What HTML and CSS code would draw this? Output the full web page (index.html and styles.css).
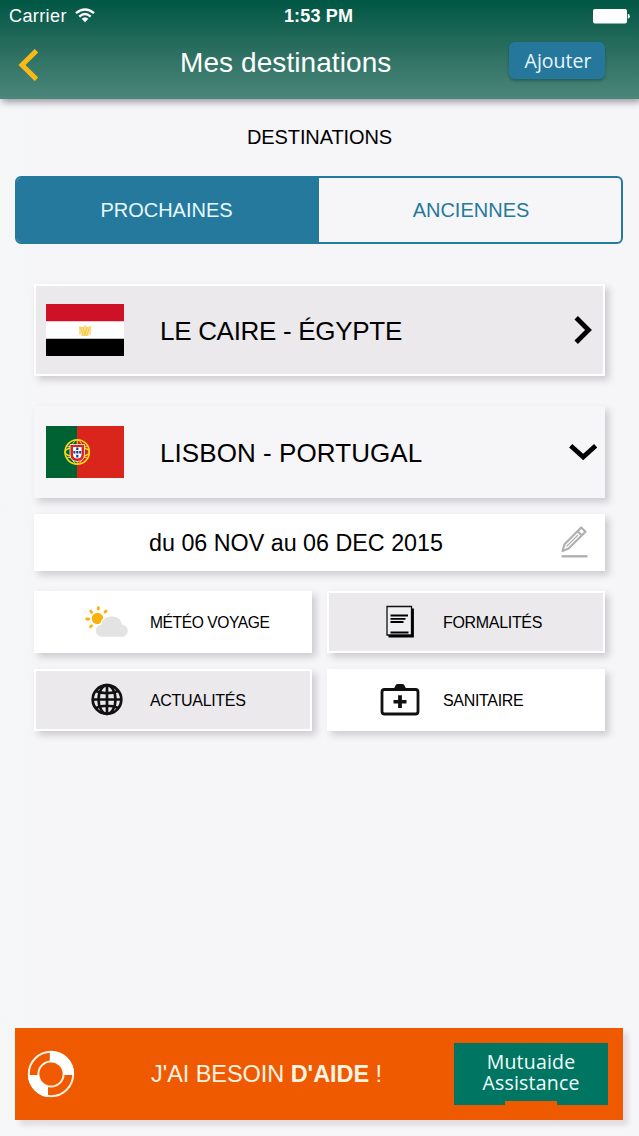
FILE: index.html
```html
<!DOCTYPE html>
<html lang="fr">
<head>
<meta charset="utf-8">
<title>Mes destinations</title>
<link rel="stylesheet" href="styles.css">
</head>
<body>
<div class="app">
  <header class="header">
    <div class="status">
      <div class="carrier"><span>Carrier</span>
        <svg class="wifi" width="20" height="15" viewBox="0 0 20 15" fill="none" stroke="#fff" stroke-width="2.4"><path d="M1 5.2Q10-2.4 19 5.2M4.3 8.6Q10 3.600 15.700 8.600"/><path d="M6.600 10.800Q10 7.800 13.400 10.800L10 14.200Z" fill="#fff" stroke="none"/></svg>
      </div>
      <span class="clock">1:53 PM</span>
      <svg class="battery" width="38" height="15" viewBox="0 0 38 15" fill="#fff"><rect x="1" y="0" width="34" height="14.500" rx="2"/><path d="M35.800 4.800Q37.800 5.200 37.800 7.200T35.800 9.800Z"/></svg>
    </div>
    <div class="nav">
      <svg class="back" width="20" height="32" viewBox="0 0 20 32" fill="none" stroke="#f6bb16" stroke-width="5"><path d="M18.500 1.700L4 16L18.500 30.300"/></svg>
      <h1 class="title">Mes destinations</h1>
      <button class="add">Ajouter</button>
    </div>
  </header>

  <main class="content">
    <h2 class="heading">DESTINATIONS</h2>
    <div class="tabs">
      <div class="tab active">PROCHAINES</div>
      <div class="tab">ANCIENNES</div>
    </div>

    <div class="list">
      <div class="card trip shaded">
        <svg class="flag" width="78" height="52" viewBox="0 0 78 52"><path fill="#fff" d="M0 0h78v52H0z"/><path fill="#ce1126" d="M0 0h78v17.300H0z"/><path d="M0 34.800h78V52H0z"/><path d="M33 22l4 1 1-1.500h2l1 1.500 4-1v9l-3-1 1 2h-8l1-2-3 1z" fill="#f9df8c"/><path d="M34 23l3 7M44 23l-3 7M37 23l2 7M41 23l-2 7M36 31h6" stroke="#f0c030" stroke-width=".8"/></svg>
        <span class="place cairo">LE CAIRE - ÉGYPTE</span>
        <svg class="arrow" width="28" height="28" viewBox="0 0 28 28" fill="none" stroke="#000" stroke-width="4.800"><path d="M7.200 1.700L19.500 14L7.200 26.300"/></svg>
      </div>

      <div class="card trip open">
        <svg class="flag" width="78" height="52" viewBox="0 0 78 52"><path fill="#da251d" d="M0 0h78v52H0z"/><path fill="#006233" d="M0 0h31v52H0z"/>
          <g fill="none" stroke="#f5dc1c" stroke-width="1.500"><circle cx="31.200" cy="26" r="12.200"/><ellipse cx="31.200" cy="26" rx="12.200" ry="5"/><ellipse cx="31.200" cy="26" rx="6" ry="12.200" stroke-width="1"/><path d="M31.200 13.500v25M20 20q11 3 22.500 0M20 32q11-3 22.500 0" stroke-width="1"/></g>
          <path d="M24 18.500h14.500v9.500q0 7.500-7.250 7.500T24 28z" fill="#da251d" stroke="#fff" stroke-width=".8"/>
          <path d="M27 21h8.600v7q0 4.500-4.300 4.500T27 28z" fill="#fff"/>
          <g fill="#173f91"><path d="M30.200 21.400h2.200v2.600h-2.200zM30.200 25h2.200v2.600h-2.200zM30.200 28.800h2.200v2.600h-2.200zM27.400 25h2v2.600h-2zM33.200 25h2v2.600h-2z"/></g>
        </svg>
        <span class="place lisbon">LISBON - PORTUGAL</span>
        <svg class="arrow" width="28" height="28" viewBox="0 0 28 28" fill="none" stroke="#000" stroke-width="4.800"><path d="M1.700 7.700L14.200 19L26.700 7.700"/></svg>
      </div>

      <div class="card date">
        <span class="range">du 06 NOV au 06 DEC 2015</span>
        <svg class="pencil" width="28" height="32" viewBox="0 0 28 32" fill="none" stroke="#b1b1b1" stroke-width="2.200" stroke-linejoin="round"><path d="M2.500 25L4.500 18.200L21.200 1.500L25.500 5.700L8.600 22.500Z"/><path d="M17.600 5.200L21.800 9.400"/><path d="M6.500 20.500L18 9" stroke-width="1.300"/><path d="M1.500 30.300h26" stroke-width="2.400"/></svg>
      </div>

      <div class="services">
        <div class="card service">
          <svg class="icon" width="46" height="34" viewBox="0 0 46 34"><circle cx="13.500" cy="13.500" r="5.800" fill="#f9b20c"/><g stroke="#f9b20c" stroke-width="2.800" stroke-linecap="round"><path d="M14.300 2.700v1.400M6.700 6.100l1 1.200M22 6l-1 1.200M2.700 14h2M6.500 21.700l1-1"/></g><path d="M17.500 32.500a6.800 6.800 0 0 1-.8-13.500C18 13.300 23 10.200 29 10.700C34 11 38 14.500 38.500 19C42 19.500 44.500 22.500 44.500 25.800S41.500 32.500 38 32.500Z" fill="#e4e3e4" stroke="#fff" stroke-width="1.400"/></svg>
          <span class="label weather">MÉTÉO VOYAGE</span>
        </div>
        <div class="card service shaded">
          <svg class="icon" width="46" height="34" viewBox="0 0 46 34"><path d="M10 1.500h24.500v28.500H10z" fill="#efeef0" stroke="#111" stroke-width="1.300"/><path d="M13.500 10.500h17.500M13.500 13.800h15M13.500 17h13M13.500 27.500h18" stroke="#000" stroke-width="1.800"/><path d="M35.600 3.500v28.800M11.500 31.300h25.400" stroke="#000" stroke-width="2.600"/></svg>
          <span class="label forms">FORMALITÉS</span>
        </div>
        <div class="card service shaded">
          <svg class="icon" width="46" height="34" viewBox="0 0 46 34" fill="none" stroke="#111" stroke-width="2.700"><circle cx="23" cy="16.500" r="14.300"/><ellipse cx="23" cy="16.500" rx="8.500" ry="14.300"/><path d="M23 2v29M8.500 16.500h29M11.500 8q11.500 4.500 23 0M11.500 25q11.500-4.500 23 0"/></svg>
          <span class="label news">ACTUALITÉS</span>
        </div>
        <div class="card service">
          <svg class="icon" width="46" height="34" viewBox="0 0 46 34"><rect x="5" y="6.500" width="36" height="24.500" rx="2.500" fill="none" stroke="#111" stroke-width="2.800"/><path d="M16.500 6.500l2-4q.5-1.500 2-1.500h5q1.500 0 2 1.500l2 4zM21.100 12.300h3.800v4.600h4.600v3.600h-4.600V25h-3.800v-4.500H16.500v-3.600h4.600z" fill="#111"/></svg>
          <span class="label health">SANITAIRE</span>
        </div>
      </div>
    </div>
  </main>

  <footer class="help">
    <svg class="buoy" width="48" height="48" viewBox="0 0 48 48" fill="none" stroke="#fdf1e6" stroke-width="2"><circle cx="24" cy="24" r="22.200"/><circle cx="24" cy="24" r="12.600"/><path d="M22.800 1A23 23 0 0 1 47 25H36.600A12.600 12.600 0 0 0 22.800 11.500ZM21 47A23 23 0 0 1 1 25H11.400A12.600 12.600 0 0 0 21 36.300Z" fill="#fff" stroke="none"/></svg>
    <span class="help-text">J'AI BESOIN <b>D'AIDE</b> !</span>
    <div class="brand">Mutuaide<br>Assistance<i class="notch"></i></div>
  </footer>
</div>
</body>
</html>
```

FILE: styles.css
```css
* { box-sizing: border-box; }
body { margin: 0; background: #f6f5f8; color: #000; font-family: "Liberation Sans", Arial, sans-serif; }
svg { display: block; flex: none; }
.app { height: 1136px; display: flex; flex-direction: column; overflow: hidden; background: linear-gradient(90deg, #f5f7f7 0, #f6f5f8 60px); }
.header { height: 99px; flex: none; color: #fff; background: linear-gradient(#005644, #2a6e5f 50%, #4b877a); box-shadow: 2px 3px 7px rgba(40, 35, 60, .45); }
.status { height: 32px; display: grid; grid-template-columns: 1fr auto 1fr; align-items: center; padding: 0 9px; }
.carrier { display: flex; align-items: center; gap: 8px; font-size: 18px; letter-spacing: .4px; }
.wifi { margin-top: -2px; }
.clock { margin-left: -2px; font-size: 18px; font-weight: bold; letter-spacing: .15px; }
.battery { justify-self: end; }
.nav { height: 67px; display: grid; grid-template-columns: 162px auto 1fr; padding: 0 34px 0 18px; }
.back { margin-top: 17px; }
.title { margin: 15px 0 0; font-size: 28px; line-height: 32px; font-weight: normal; letter-spacing: .08px; white-space: nowrap; }
.add { justify-self: end; width: 96px; height: 37px; margin-top: 10px; padding: 0 0 1px 2px; border: 0; border-radius: 6px; color: #e9f7ff; background: #25789c; box-shadow: 0 2px 3px rgba(0, 40, 40, .35); font: 19.500px "Open Sans", "Noto Sans", sans-serif; }
.content { flex: 1; padding: 27px 16px 0 15px; }
.heading { margin: 0; padding-left: 1px; text-align: center; font-size: 20px; line-height: 22px; font-weight: normal; letter-spacing: -.1px; }
.tabs { display: flex; height: 68px; margin-top: 28px; border: 2px solid #25799c; border-radius: 6px; overflow: hidden; }
.tab { flex: 0 0 50%; display: flex; align-items: center; justify-content: center; font-size: 20px; color: #25799c; }
.tab:last-child { padding-left: 2px; }
.tab.active { padding-right: 3px; color: #e8f8ff; background: #25799c; }
.list { width: 571px; margin: 40px 0 0 19px; }
.card { display: flex; align-items: center; background: #fff; box-shadow: 4px 4px 7px rgba(60, 55, 65, .22); }
.shaded { background: #ebe9ec; border: 2px solid #fff; }
.trip { height: 92px; padding: 0 8px 0 12px; }
.trip.shaded { padding: 0 6px 0 10px; }
.open { margin-top: 30px; background: #f6f5f8; }
.flag { margin-right: 36px; }
.place { padding-top: 2px; font-size: 26px; white-space: nowrap; }
.cairo { letter-spacing: -.3px; }
.lisbon { letter-spacing: .07px; }
.arrow { margin-left: auto; }
.date { height: 57px; margin-top: 16px; padding: 0 17px 0 115px; }
.range { padding-top: 2px; font-size: 23.300px; white-space: nowrap; }
.pencil { margin-left: auto; margin-top: -2px; }
.services { display: grid; grid-template-columns: 278px 278px; grid-template-rows: 62px 62px; gap: 16px 15px; margin-top: 20px; }
.service { padding-left: 50px; gap: 20px; }
.service.shaded { padding-left: 48px; }
.label { padding-top: 2px; font-size: 16px; letter-spacing: -.32px; white-space: nowrap; }
.weather { font-size: 15.600px; letter-spacing: -.42px; }
.help { flex: none; height: 92px; margin: 0 16px 16px 15px; padding: 0 15px 0 12px; display: flex; align-items: center; background: #ef5a00; color: #fdf3e3; box-shadow: 5px 5px 5px rgba(80, 50, 60, .13); }
.help-text { margin-left: 76px; font-size: 23.500px; letter-spacing: -.05px; white-space: nowrap; }
.brand { position: relative; width: 154px; height: 62px; margin-left: auto; padding-top: 8px; text-align: center; background: #007561; color: #f2ffff; font: 500 19.500px/21px "Open Sans", "Noto Sans", sans-serif; letter-spacing: .2px; }
.notch { position: absolute; bottom: 0; left: 51px; width: 52px; height: 4px; background: #ef5a00; }
```
